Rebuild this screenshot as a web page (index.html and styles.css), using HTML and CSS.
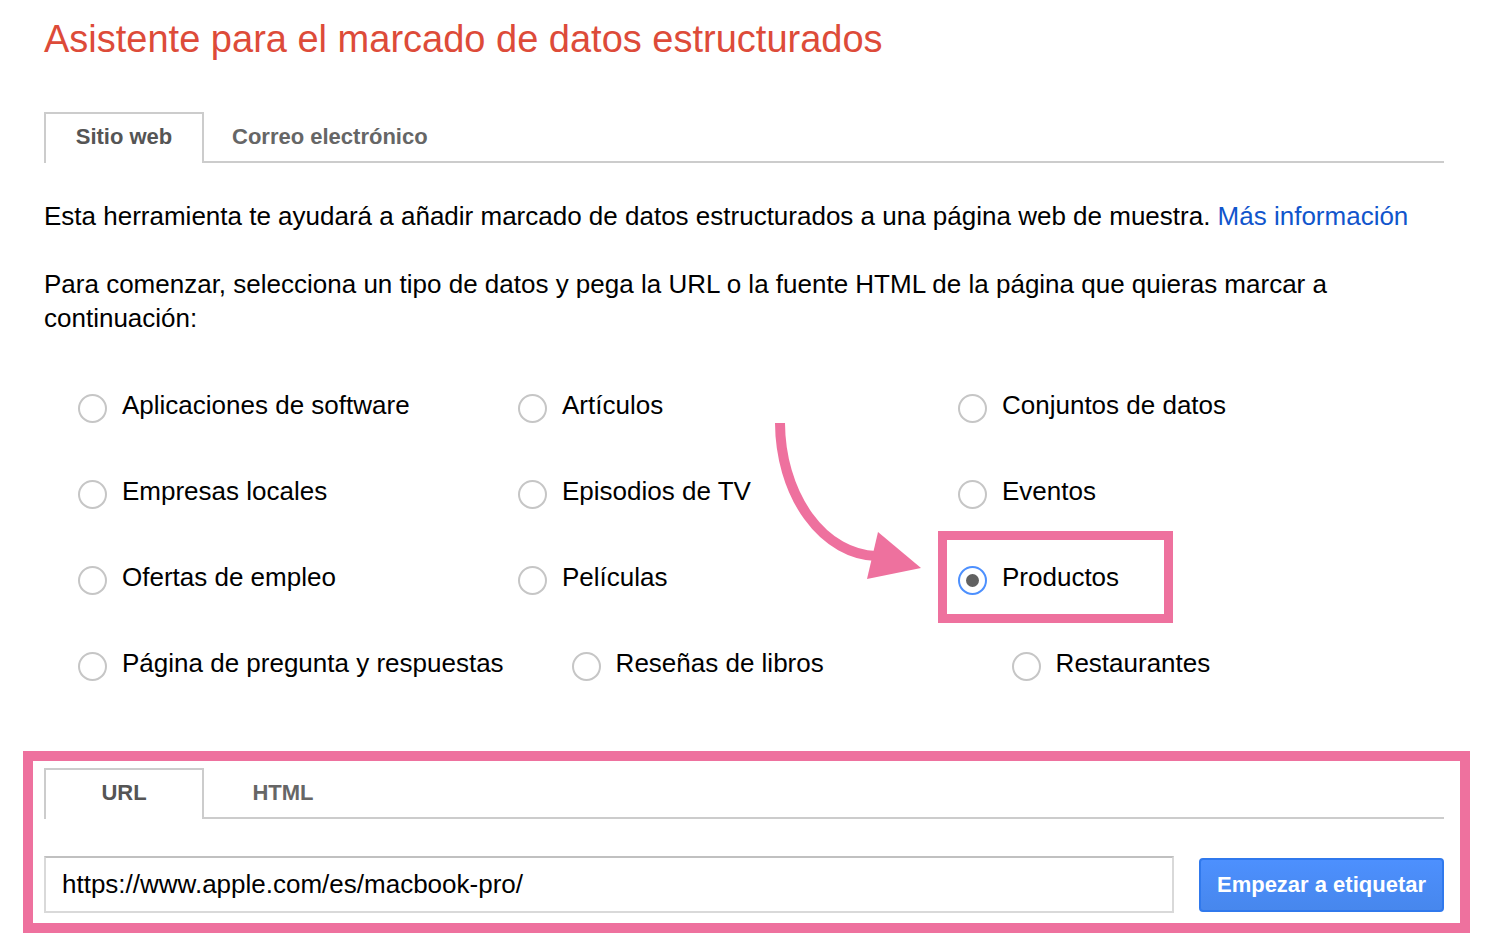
FILE: index.html
```html
<!DOCTYPE html>
<html lang="es">
<head>
<meta charset="utf-8">
<title>Asistente para el marcado de datos estructurados</title>
<link rel="stylesheet" href="styles.css">
</head>
<body>
<div class="page">
  <h1 class="title">Asistente para el marcado de datos estructurados</h1>

  <div class="tabs">
    <div class="tab active">Sitio web</div>
    <div class="tab">Correo electrónico</div>
  </div>

  <p class="intro">Esta herramienta te ayudará a añadir marcado de datos estructurados a una página web de muestra. <a href="#" class="link">Más información</a></p>
  <p class="intro second">Para comenzar, selecciona un tipo de datos y pega la URL o la fuente HTML de la página que quieras marcar a continuación:</p>

  <div class="options">
    <div class="row">
      <label class="opt"><span class="radio"></span><span>Aplicaciones de software</span></label>
      <label class="opt"><span class="radio"></span><span>Artículos</span></label>
      <label class="opt"><span class="radio"></span><span>Conjuntos de datos</span></label>
    </div>
    <div class="row">
      <label class="opt"><span class="radio"></span><span>Empresas locales</span></label>
      <label class="opt"><span class="radio"></span><span>Episodios de TV</span></label>
      <label class="opt"><span class="radio"></span><span>Eventos</span></label>
    </div>
    <div class="row">
      <label class="opt"><span class="radio"></span><span>Ofertas de empleo</span></label>
      <label class="opt"><span class="radio"></span><span>Películas</span></label>
      <label class="opt selected"><span class="radio checked"></span><span>Productos</span><span class="highlight"></span></label>
    </div>
    <div class="row">
      <label class="opt"><span class="radio"></span><span>Página de pregunta y respuestas</span></label>
      <label class="opt"><span class="radio"></span><span>Reseñas de libros</span></label>
      <label class="opt"><span class="radio"></span><span>Restaurantes</span></label>
    </div>
    <svg class="arrow" width="200" height="200" viewBox="760 410 200 200" xmlns="http://www.w3.org/2000/svg">
      <path d="M780 422 A 98 134 0 0 0 876 555" fill="none" stroke="#ee719e" stroke-width="10"/>
      <polygon points="878,531 921,567 867,578" fill="#ee719e"/>
    </svg>
  </div>

  <div class="source">
    <div class="tabs">
      <div class="tab active">URL</div>
      <div class="tab">HTML</div>
    </div>
    <div class="input-row">
      <div class="url-input">https://www.apple.com/es/macbook-pro/</div>
      <button class="btn">Empezar a etiquetar</button>
    </div>
  </div>
</div>
</body>
</html>
```

FILE: styles.css
```css
html, body {
  margin: 0;
  padding: 0;
  background: #ffffff;
}

body {
  font-family: "Liberation Sans", Arial, sans-serif;
  color: #000000;
}

.page {
  width: 1400px;
  padding: 0 0 0 44px;
}

.title {
  margin: 16px 0 0;
  font-size: 38px;
  line-height: 46px;
  font-weight: normal;
  color: #dd4b39;
}

.tabs {
  display: flex;
  margin-top: 50px;
  border-bottom: 2px solid #cccccc;
  height: 49px;
}

.tab {
  box-sizing: border-box;
  min-width: 160px;
  height: 51px;
  padding: 0 28px 4px;
  display: flex;
  align-items: center;
  justify-content: center;
  font-size: 22px;
  font-weight: bold;
  color: #666666;
  border: 2px solid transparent;
  border-bottom: none;
}

.tab + .tab {
  padding-left: 26px;
}

.tab.active {
  border-color: #cccccc;
  background: #ffffff;
  color: #555555;
}

.intro {
  margin: 36px 0 0;
  font-size: 26px;
  line-height: 34px;
}

.intro.second {
  margin-top: 34px;
}

.link {
  color: #1155cc;
  text-decoration: none;
}

.options {
  position: relative;
  margin: 27px 0 0 34px;
}

.row {
  display: flex;
  height: 86px;
  align-items: center;
}

.opt {
  box-sizing: border-box;
  flex: none;
  white-space: nowrap;
  min-width: 440px;
  padding-right: 68px;
  display: flex;
  align-items: center;
  gap: 15px;
  font-size: 26px;
  position: relative;
}

.radio {
  box-sizing: border-box;
  width: 29px;
  height: 29px;
  border: 2px solid #c6c6c6;
  border-radius: 50%;
  flex: none;
  margin-top: 6px;
  display: flex;
  align-items: center;
  justify-content: center;
}

.radio.checked {
  border-color: #4d90fe;
}

.radio.checked::after {
  content: "";
  width: 13px;
  height: 13px;
  border-radius: 50%;
  background: #616161;
}

.highlight {
  position: absolute;
  left: -20px;
  top: -29px;
  width: 235px;
  height: 92px;
  box-sizing: border-box;
  border: 9px solid #ee719e;
}

.arrow {
  position: absolute;
  left: 682px;
  top: 49px;
}

.source {
  margin: 45px 0 0 -21px;
  border: 10px solid #ee719e;
  padding: 7px 16px 10px 11px;
  box-sizing: content-box;
  width: 1400px;
}

.source .tabs {
  margin-top: 0;
}

.input-row {
  display: flex;
  align-items: center;
  gap: 25px;
  margin-top: 37px;
}

.url-input {
  box-sizing: border-box;
  width: 1130px;
  height: 57px;
  border: 2px solid #d9d9d9;
  border-top-color: #c0c0c0;
  padding: 0 16px;
  display: flex;
  align-items: center;
  font-size: 26px;
  color: #000000;
}

.btn {
  box-sizing: border-box;
  width: 245px;
  height: 54px;
  border: 2px solid #3079ed;
  border-radius: 4px;
  background: linear-gradient(#4d90fe, #4787ed);
  color: #ffffff;
  font-family: "Liberation Sans", Arial, sans-serif;
  font-size: 22px;
  font-weight: bold;
  padding: 0;
}
```
